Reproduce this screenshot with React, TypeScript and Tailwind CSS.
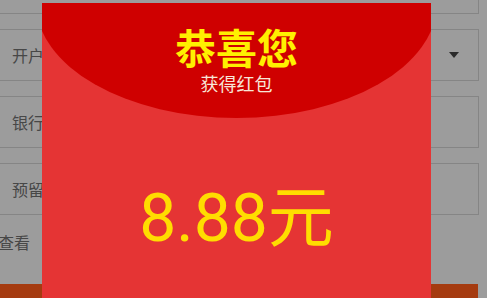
const Row = ({ label, arrow }: { label?: string; arrow?: boolean }) => (
  <div className="h-[52px] w-[479px] border border-l-0 border-[#858585] flex items-center justify-between pl-[12px] pr-[19px]">
    <span className="text-[16px] leading-[24px] text-[#474747]">{label}</span>
    {arrow && (
      <span className="w-0 h-0 border-l-[5px] border-r-[5px] border-t-[6px] border-l-transparent border-r-transparent border-t-[#2a2a2a]" />
    )}
  </div>
)

export default function App() {
  return (
    <div className="relative w-[487px] h-[298px] overflow-hidden bg-[#9c9c9c] font-['Noto_Sans_CJK_SC',sans-serif]">
      <div className="flex flex-col gap-[15px] -mt-[38px]">
        <Row />
        <Row label="开户" arrow />
        <Row label="银行" />
        <Row label="预留" />
      </div>
      <div className="mt-[15px] -ml-[2px] text-[16px] leading-[24px] text-[#474747]">查看</div>
      <div className="mt-[30px] w-[478px] h-[20px] bg-[#a53b10]" />

      <div className="absolute left-[42px] top-[3px] w-[389px] h-[300px] overflow-hidden bg-[#e53434]">
        <div className="-ml-[6px] w-[401px] h-[115px] rounded-b-[50%_100%] bg-[#cf0000] flex flex-col items-center pt-[20px]">
          <div className="text-[41px] leading-[46px] font-bold text-[#fff000]">恭喜您</div>
          <div className="mt-[3px] text-[18px] leading-[22px] text-[#f8e6d8]">获得红包</div>
        </div>
        <div className="mt-[63px] flex justify-center text-[66px] leading-[76px] text-[#ffdd00] font-['Roboto','Noto_Sans_CJK_SC',sans-serif]">
          8.88元
        </div>
      </div>
    </div>
  )
}
